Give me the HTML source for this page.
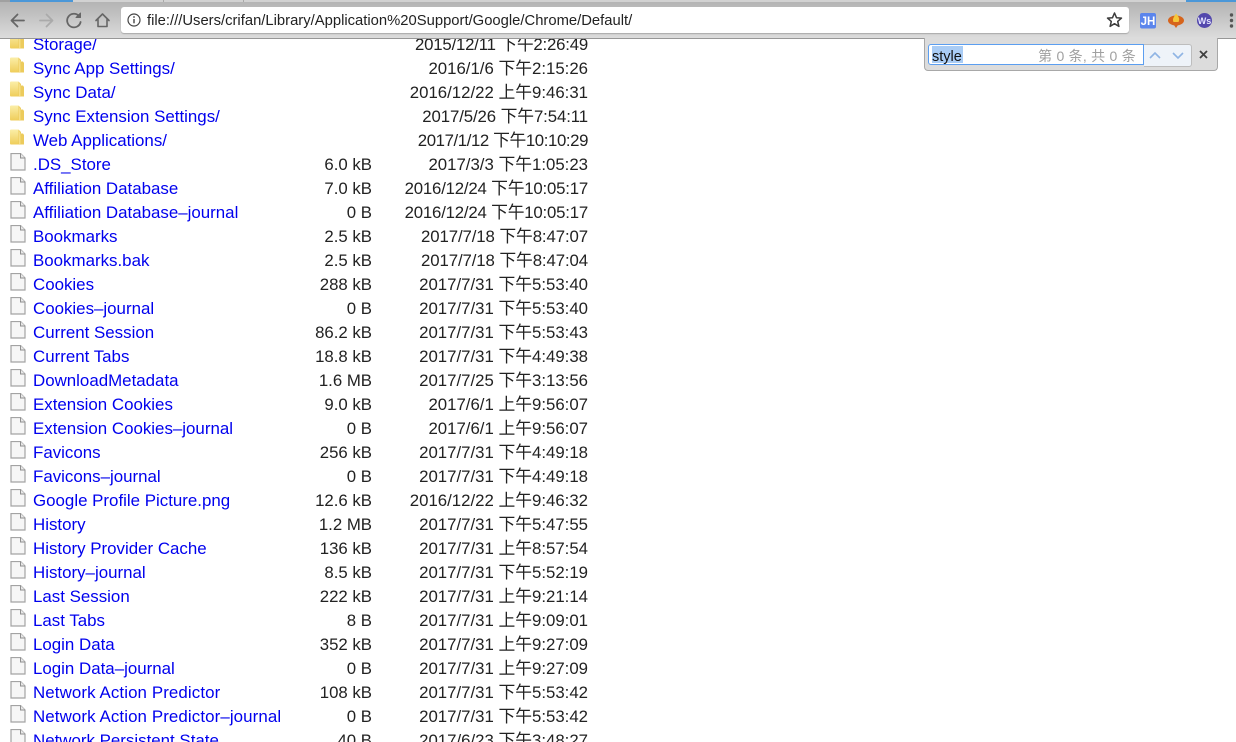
<!DOCTYPE html>
<html><head><meta charset="utf-8">
<style>
html,body{margin:0;padding:0;background:#fff;width:1236px;height:742px;overflow:hidden}
body{position:relative;font-family:"Liberation Sans","Noto Sans CJK SC",sans-serif;font-size:16.9px}
.r{position:absolute;left:0;width:600px;height:24px;line-height:24px;white-space:nowrap}
.r a{position:absolute;left:33px;top:1px;color:#0000ee;text-decoration:none}
.r a.w{letter-spacing:.1px}
.r s{position:absolute;right:228px;top:1px;text-decoration:none;color:#222;font-size:16.8px}
.r b{position:absolute;right:12px;top:1px;font-weight:normal;color:#222;font-size:16.8px}
.r b.t1{letter-spacing:-.1px}
.r b.t2{letter-spacing:-.2px}
.r b.t4{letter-spacing:-.4px}
.r svg{position:absolute;left:10px;top:1px}
#bar{position:absolute;left:0;top:0;width:1236px;height:38px;background:linear-gradient(#b2b2b2,#c4c4c4 45%,#dcdcdc);border-bottom:1px solid #979797;z-index:5}
#tabs{position:absolute;left:0;top:0;width:1236px;height:2px;background:#d2d2d2}
#tabs i{position:absolute;top:0;height:2px;display:block}
#url{position:absolute;left:121px;top:7px;width:1008px;height:26px;background:#fff;border-radius:3px;box-shadow:0 1px 1px #a8a8a8}
#url span{position:absolute;left:26px;top:1px;line-height:26px;font-size:14.8px;color:#222;white-space:nowrap}
#find{position:absolute;left:924px;top:38px;width:292px;height:32px;background:#dcdcdc;border:1px solid #a8a8a8;border-top:none;border-radius:0 0 4px 4px;z-index:6}
#inp{position:absolute;left:3px;top:6px;width:214px;height:19px;background:#fff;border:1.5px solid #5b9ef0;border-radius:3px 0 0 3px}
#sel{position:absolute;left:3px;top:1px;height:17px;line-height:22px;overflow:visible;background:#a9ccf5;font-size:14.500px;color:#111;padding:0 1px 0 0}
#cnt{position:absolute;right:7px;top:0;line-height:23px;font-size:14px;color:#a0a0a0;letter-spacing:.25px;white-space:nowrap}
#btns{position:absolute;left:219px;top:6px;width:47px;height:21px;background:#eef3f9;border:1px solid #bdbdbd;border-left:none;border-radius:0 3px 3px 0}
</style></head><body>

<svg width="0" height="0" style="position:absolute"><defs>
<linearGradient id="fg" x1="0" y1="0" x2="0" y2="1"><stop offset="0" stop-color="#fbeea8"/><stop offset="1" stop-color="#efcd5a"/></linearGradient>
<symbol id="fo" viewBox="0 0 14 16"><path d="M0 1.500Q0 .5 1 .5H8.500V15.500H1Q0 15.500 0 14.500Z" fill="url(#fg)"/><path d="M8.500 .5L11 3V4.500H13L14 6V15.500H8.500Z" fill="#eccb5c"/><path d="M9.300 2V15H10.300V4Z" fill="#f9e798"/></symbol>
<symbol id="fi" viewBox="0 0 16 18"><path d="M1 .5H10.500L15 5V17H1Z" fill="#f6f6f6" stroke="#a3a3a3" stroke-width="1.200"/><path d="M10.500 .5V5H15" fill="#e8e8e8" stroke="#8f8f8f"/></symbol>
</defs></svg>

<div class="r" style="top:32px"><svg width="14" height="16"><use href="#fo"/></svg><a>Storage/</a><b class="t2">2015/12/11 下午2:26:49</b></div>
<div class="r" style="top:56px"><svg width="14" height="16"><use href="#fo"/></svg><a>Sync App Settings/</a><b>2016/1/6 下午2:15:26</b></div>
<div class="r" style="top:80px"><svg width="14" height="16"><use href="#fo"/></svg><a>Sync Data/</a><b>2016/12/22 上午9:46:31</b></div>
<div class="r" style="top:104px"><svg width="14" height="16"><use href="#fo"/></svg><a>Sync Extension Settings/</a><b class="t1">2017/5/26 下午7:54:11</b></div>
<div class="r" style="top:128px"><svg width="14" height="16"><use href="#fo"/></svg><a>Web Applications/</a><b class="t4">2017/1/12 下午10:10:29</b></div>
<div class="r" style="top:152px"><svg width="16" height="18"><use href="#fi"/></svg><a>.DS_Store</a><s>6.0 kB</s><b>2017/3/3 下午1:05:23</b></div>
<div class="r" style="top:176px"><svg width="16" height="18"><use href="#fi"/></svg><a>Affiliation Database</a><s>7.0 kB</s><b class="t2">2016/12/24 下午10:05:17</b></div>
<div class="r" style="top:200px"><svg width="16" height="18"><use href="#fi"/></svg><a>Affiliation Database–journal</a><s>0 B</s><b class="t2">2016/12/24 下午10:05:17</b></div>
<div class="r" style="top:224px"><svg width="16" height="18"><use href="#fi"/></svg><a>Bookmarks</a><s>2.5 kB</s><b class="t1">2017/7/18 下午8:47:07</b></div>
<div class="r" style="top:248px"><svg width="16" height="18"><use href="#fi"/></svg><a>Bookmarks.bak</a><s>2.5 kB</s><b class="t1">2017/7/18 下午8:47:04</b></div>
<div class="r" style="top:272px"><svg width="16" height="18"><use href="#fi"/></svg><a>Cookies</a><s>288 kB</s><b>2017/7/31 下午5:53:40</b></div>
<div class="r" style="top:296px"><svg width="16" height="18"><use href="#fi"/></svg><a>Cookies–journal</a><s>0 B</s><b>2017/7/31 下午5:53:40</b></div>
<div class="r" style="top:320px"><svg width="16" height="18"><use href="#fi"/></svg><a>Current Session</a><s>86.2 kB</s><b>2017/7/31 下午5:53:43</b></div>
<div class="r" style="top:344px"><svg width="16" height="18"><use href="#fi"/></svg><a>Current Tabs</a><s>18.8 kB</s><b>2017/7/31 下午4:49:38</b></div>
<div class="r" style="top:368px"><svg width="16" height="18"><use href="#fi"/></svg><a>DownloadMetadata</a><s>1.6 MB</s><b>2017/7/25 下午3:13:56</b></div>
<div class="r" style="top:392px"><svg width="16" height="18"><use href="#fi"/></svg><a>Extension Cookies</a><s>9.0 kB</s><b>2017/6/1 上午9:56:07</b></div>
<div class="r" style="top:416px"><svg width="16" height="18"><use href="#fi"/></svg><a>Extension Cookies–journal</a><s>0 B</s><b>2017/6/1 上午9:56:07</b></div>
<div class="r" style="top:440px"><svg width="16" height="18"><use href="#fi"/></svg><a>Favicons</a><s>256 kB</s><b>2017/7/31 下午4:49:18</b></div>
<div class="r" style="top:464px"><svg width="16" height="18"><use href="#fi"/></svg><a>Favicons–journal</a><s>0 B</s><b>2017/7/31 下午4:49:18</b></div>
<div class="r" style="top:488px"><svg width="16" height="18"><use href="#fi"/></svg><a>Google Profile Picture.png</a><s>12.6 kB</s><b>2016/12/22 上午9:46:32</b></div>
<div class="r" style="top:512px"><svg width="16" height="18"><use href="#fi"/></svg><a>History</a><s>1.2 MB</s><b>2017/7/31 下午5:47:55</b></div>
<div class="r" style="top:536px"><svg width="16" height="18"><use href="#fi"/></svg><a>History Provider Cache</a><s>136 kB</s><b>2017/7/31 上午8:57:54</b></div>
<div class="r" style="top:560px"><svg width="16" height="18"><use href="#fi"/></svg><a>History–journal</a><s>8.5 kB</s><b>2017/7/31 下午5:52:19</b></div>
<div class="r" style="top:584px"><svg width="16" height="18"><use href="#fi"/></svg><a>Last Session</a><s>222 kB</s><b>2017/7/31 上午9:21:14</b></div>
<div class="r" style="top:608px"><svg width="16" height="18"><use href="#fi"/></svg><a>Last Tabs</a><s>8 B</s><b>2017/7/31 上午9:09:01</b></div>
<div class="r" style="top:632px"><svg width="16" height="18"><use href="#fi"/></svg><a>Login Data</a><s>352 kB</s><b>2017/7/31 上午9:27:09</b></div>
<div class="r" style="top:656px"><svg width="16" height="18"><use href="#fi"/></svg><a>Login Data–journal</a><s>0 B</s><b>2017/7/31 上午9:27:09</b></div>
<div class="r" style="top:680px"><svg width="16" height="18"><use href="#fi"/></svg><a class="w">Network Action Predictor</a><s>108 kB</s><b>2017/7/31 下午5:53:42</b></div>
<div class="r" style="top:704px"><svg width="16" height="18"><use href="#fi"/></svg><a class="w">Network Action Predictor–journal</a><s>0 B</s><b>2017/7/31 下午5:53:42</b></div>
<div class="r" style="top:728px"><svg width="16" height="18"><use href="#fi"/></svg><a>Network Persistent State</a><s>40 B</s><b>2017/6/23 下午3:48:27</b></div>

<div id="bar">
  <div id="tabs"><i style="left:0;width:10px;background:#a0a0a0"></i><i style="left:10px;width:63px;background:#4a97d8"></i><i style="left:163px;width:1px;background:#a8a8a8"></i><i style="left:243px;width:1px;background:#a8a8a8"></i><i style="left:1186px;width:50px;background:#4a97d8"></i></div>
  <svg width="120" height="38" style="position:absolute;left:0;top:0" fill="none" stroke-linecap="round" stroke-linejoin="round">
    <path d="M24 20.500H12M17.500 14.500L11.500 20.500L17.500 26.500" stroke="#666" stroke-width="1.800"/>
    <path d="M40 20.500H52M46.500 14.500L52.500 20.500L46.500 26.500" stroke="#aaa" stroke-width="1.800"/>
    <path d="M79 16A6.800 6.800 0 1 0 80.600 22" stroke="#666" stroke-width="1.800"/>
    <path d="M80.500 13V17.500H76Z" fill="#666" stroke="#666" stroke-width="1"/>
    <path d="M96 20.500L102.500 14L109 20.500M98 19.500V26.500H107V19.500" stroke="#666" stroke-width="1.600"/>
  </svg>
  <div id="url">
    <svg width="16" height="16" style="position:absolute;left:6px;top:6px" fill="none"><circle cx="7" cy="7" r="6" stroke="#444" stroke-width="1.200"/><path d="M7 6V10.300" stroke="#444" stroke-width="1.400"/><circle cx="7" cy="4" r=".9" fill="#444"/></svg>
    <span>file:///Users/crifan/Library/Application%20Support/Google/Chrome/Default/</span>
    <svg width="18" height="18" style="position:absolute;left:985px;top:4px" fill="none"><path d="M8.500 2L10.500 6.700L15.500 7.100L11.700 10.400L12.900 15.400L8.500 12.700L4.100 15.400L5.300 10.400L1.500 7.100L6.500 6.700Z" stroke="#3c3c3c" stroke-width="1.500" stroke-linejoin="round"/></svg>
  </div>
  <svg width="100" height="38" style="position:absolute;left:1136px;top:0">
    <rect x="4" y="13" width="16" height="15.500" rx="2" fill="#5b85ec"/>
    <text x="12" y="25" font-family="Liberation Sans" font-size="11.500" font-weight="bold" fill="#fff" text-anchor="middle">JH</text>
    <ellipse cx="40" cy="20.500" rx="8" ry="5" fill="#d6641c"/><path d="M38 25H42L40 28Z" fill="#d6641c"/><path d="M40 13.500C43 17 44 19 42.500 22H37.500C36 19 38 17 40 13.500Z" fill="#f5c83a"/>
    <circle cx="68.500" cy="20.500" r="7.500" fill="#5348ad"/>
    <text x="68.500" y="24" font-family="Liberation Sans" font-size="9" font-weight="bold" fill="#e4e4ff" text-anchor="middle">Ws</text>
    <circle cx="95.500" cy="15" r="1.700" fill="#555"/><circle cx="95.500" cy="20.500" r="1.700" fill="#555"/><circle cx="95.500" cy="26" r="1.700" fill="#555"/>
  </svg>
</div>

<div id="find">
  <div id="inp"><div id="sel">style</div><div id="cnt">第 0 条, 共 0 条</div></div>
  <div id="btns">
    <svg width="47" height="21" fill="none" style="position:absolute;left:0;top:0"><path d="M6 13L11 8L16 13M29 8L34 13L39 8" stroke="#8fb4e4" stroke-width="1.600"/></svg>
  </div>
  <svg width="12" height="12" style="position:absolute;left:273px;top:11px" fill="none"><path d="M2 2L9 9M9 2L2 9" stroke="#3f3f3f" stroke-width="1.800"/></svg>
</div>
</body></html>
